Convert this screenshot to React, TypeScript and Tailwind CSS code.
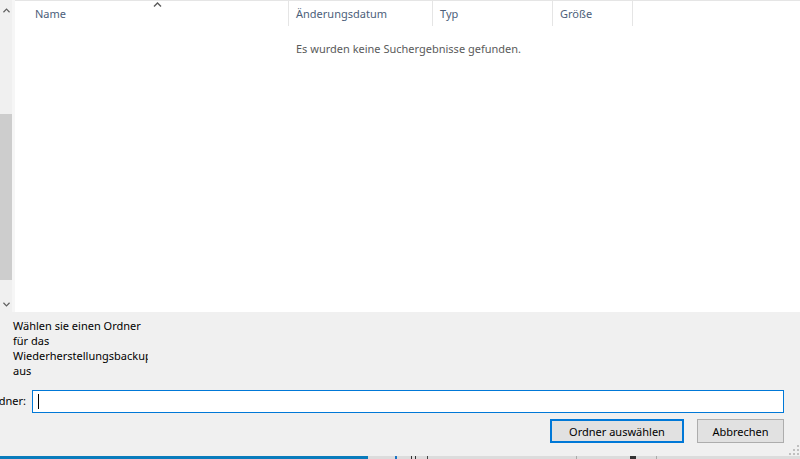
import { type ReactNode } from 'react';

// Folder picker dialog: empty result list on top, prompt + folder field below.

const FONT = "font-['Noto_Sans','Open_Sans',sans-serif]";

function Chevron({ dir, className }: { dir: 'up' | 'down'; className?: string }) {
  return (
    <svg viewBox="0 0 8 5" className={className} fill="none">
      <path
        d={dir === 'up' ? 'M0.5 4.5 L4 1 L7.5 4.5' : 'M0.5 0.5 L4 4 L7.5 0.5'}
        stroke="currentColor"
        strokeWidth="1.4"
      />
    </svg>
  );
}

function HeaderCell({ width, children, pad = 'pl-[7px]' }: { width: string; children?: ReactNode; pad?: string }) {
  return (
    <div className={`${width} h-[25px] shrink-0 flex items-center border-r border-[#e5e5e5] ${pad}`}>
      <span className="text-[11px] text-[#4c607a] leading-none">{children}</span>
    </div>
  );
}

function Scrollbar() {
  return (
    <div className="w-[12px] shrink-0 bg-[#f0f0f0] flex flex-col items-center">
      <Chevron dir="up" className="w-[7px] h-[5px] mt-[8px] text-[#606060]" />
      <div className="h-[101px]" />
      <div className="w-[12px] h-[166px] bg-[#cdcdcd]" />
      <div className="flex-1" />
      <Chevron dir="down" className="w-[7px] h-[5px] mb-[5px] text-[#606060]" />
    </div>
  );
}

export default function App() {
  return (
    <div className={`w-[800px] h-[459px] overflow-hidden flex flex-col bg-[#f0f0f0] ${FONT}`}>
      {/* result list */}
      <div className="h-[312px] flex shrink-0">
        <Scrollbar />
        <div className="w-[3px] bg-[#f6f6f6]" />
        <div className="flex-1 bg-white flex flex-col border-t border-[#e5e5e5]">
          <div className="flex">
            <div className="relative">
              <HeaderCell width="w-[274px]" pad="pl-[20px]">Name</HeaderCell>
              <Chevron dir="up" className="absolute left-[138px] top-[1px] w-[9px] h-[5px] text-[#5a5a5a]" />
            </div>
            <HeaderCell width="w-[144px]">Änderungsdatum</HeaderCell>
            <HeaderCell width="w-[120px]">Typ</HeaderCell>
            <HeaderCell width="w-[80px]">Größe</HeaderCell>
          </div>
          <div className="pl-[281px] pt-[17px] text-[11px] text-[#5a5a5a] leading-none">
            Es wurden keine Suchergebnisse gefunden.
          </div>
        </div>
      </div>

      {/* bottom panel */}
      <div className="relative flex-1 flex flex-col text-[11px] text-black">
        <div className="pl-[13px] pt-[6px] w-[148px] overflow-hidden leading-[15px] whitespace-nowrap">
          <div>Wählen sie einen Ordner</div>
          <div>für das</div>
          <div>Wiederherstellungsbackup</div>
          <div>aus</div>
        </div>

        <div className="flex items-center mt-[12px]">
          <div className="w-[27px] overflow-hidden flex justify-end whitespace-nowrap">
            <span className="pr-[1px]">Ordner:</span>
          </div>
          <div className="ml-[5px] w-[752px] h-[23px] border border-[#0078d7] bg-white flex items-center pl-[5px]">
            <div className="w-px h-[15px] bg-black" />
          </div>
        </div>

        <div className="flex justify-end gap-[13px] pr-[16px] mt-[6px]">
          <button className="w-[134px] h-[24px] border-2 border-[#0078d7] bg-[#e1e1e1] text-[11px] leading-none">
            Ordner auswählen
          </button>
          <button className="w-[87px] h-[24px] border border-[#adadad] bg-[#e1e1e1] text-[11px] leading-none">
            Abbrechen
          </button>
        </div>

        {/* resize grip */}
        <svg viewBox="0 0 10 10" className="absolute right-[1px] bottom-[1px] w-[10px] h-[10px]">
          {[
            [8, 0],
            [4, 4], [8, 4],
            [0, 8], [4, 8], [8, 8],
          ].map(([x, y]) => (
            <rect key={`${x}-${y}`} x={x} y={y} width="2" height="2" fill="#c0c0c0" />
          ))}
        </svg>
      </div>

      {/* window behind, peeking out */}
      <div className="h-[3px] shrink-0 flex">
        <div className="w-[368px] bg-[#0a7cbc]" />
        <div className="flex-1 bg-[#dcdcdc] flex">
          <div className="ml-[27px] w-[2px] bg-[#1a73c4]" />
          <div className="ml-[14px] w-px bg-[#333]" />
          <div className="ml-[3px] w-px bg-[#333]" />
          <div className="ml-[11px] w-px bg-[#444]" />
          <div className="ml-[148px] w-px bg-[#aaa]" />
          <div className="ml-[53px] w-[6px] bg-[#333]" />
          <div className="ml-[20px] w-px bg-[#aaa]" />
        </div>
      </div>
    </div>
  );
}
